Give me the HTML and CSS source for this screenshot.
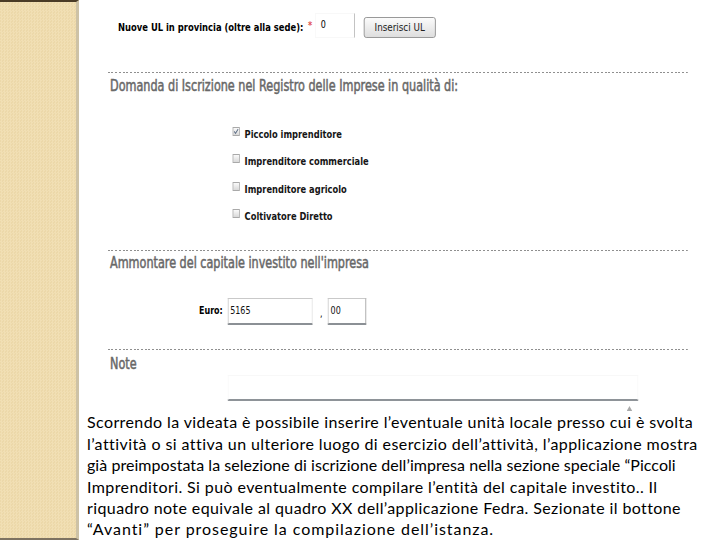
FILE: index.html
```html
<!DOCTYPE html>
<html lang="it">
<head>
<meta charset="utf-8">
<title>Iscrizione</title>
<link rel="stylesheet" href="styles.css">
</head>
<body>
<div class="page">
  <aside class="sidebar"></aside>
  <main class="main">
    <div class="shot">
      <div class="ul-row">
        <span class="lbl">Nuove UL in provincia (oltre alla sede):</span>
        <span class="req">*</span>
        <span class="ul-input">0</span>
        <span class="btn">Inserisci UL</span>
      </div>
      <div class="sep sep1"></div>
      <h2 class="sec sec1">Domanda di Iscrizione nel Registro delle Imprese in qualità di:</h2>
      <ul class="checks">
        <li><span class="cb"><svg viewBox="0 0 9 9" width="7" height="7"><path d="M1.2 4.4 L3.4 6.8 L7.6 1.4" fill="none" stroke="#5f6f86" stroke-width="1.4"/></svg></span>Piccolo imprenditore</li>
        <li><span class="cb"></span>Imprenditore commerciale</li>
        <li><span class="cb"></span>Imprenditore agricolo</li>
        <li><span class="cb"></span>Coltivatore Diretto</li>
      </ul>
      <div class="sep sep2"></div>
      <h2 class="sec sec2">Ammontare del capitale investito nell'impresa</h2>
      <div class="euro-row">
        <span class="euro-lbl">Euro:</span>
        <span class="field f-int">5165</span>
        <span class="comma">,</span>
        <span class="field f-dec">00</span>
      </div>
      <div class="sep sep3"></div>
      <h2 class="sec sec3">Note</h2>
      <div class="note-area"></div>
      <div class="scroll-arrow"></div>
    </div>
    <div class="caption">
      <span class="line l1">Scorrendo la videata è possibile inserire l’eventuale unità locale presso cui è svolta</span>
      <span class="line l2">l’attività o si attiva un ulteriore luogo di esercizio dell’attività, l’applicazione mostra</span>
      <span class="line l3">già preimpostata la selezione di iscrizione dell’impresa nella sezione speciale “Piccoli</span>
      <span class="line l4">Imprenditori. Si può eventualmente compilare l’entità del capitale investito.. Il</span>
      <span class="line l5">riquadro note equivale al quadro XX dell’applicazione Fedra. Sezionate il bottone</span>
      <span class="line l6">“Avanti” per proseguire la compilazione dell’istanza.</span>
    </div>
  </main>
</div>
</body>
</html>
```
FILE: styles.css
```css
* { box-sizing: border-box; }
html, body { margin: 0; padding: 0; }
body { width: 720px; height: 540px; overflow: hidden; background: #fff; }

.page { display: flex; height: 540px; }

.sidebar {
  width: 79px;
  flex: none;
  background-color: #efdcaf;
  background-image: repeating-conic-gradient(#f1dfb4 0 25%, #ecd8a9 0 50%);
  background-size: 3px 3px;
  border-top: 2px solid #4a3b26;
  border-bottom: 2px solid #7d7261;
  border-right: 3px solid #cdc2a6;
}

.main { flex: 1; min-width: 0; display: flex; flex-direction: column; overflow: hidden; }

.shot {
  width: 801px;
  height: 411.2px;
  flex: none;
  transform: scaleX(0.8);
  transform-origin: 0 0;
  font-family: "DejaVu Sans", sans-serif;
  color: #000;
}

.ul-row { display: flex; align-items: flex-start; margin-top: 13px; height: 25px; padding-left: 48.75px; }
.lbl { font-weight: bold; font-size: 10.5px; line-height: 14px; margin-top: 7.4px; white-space: nowrap; }
.req { color: #e25555; font-weight: bold; font-size: 10px; line-height: 10px; margin-top: 7.5px; margin-left: 5.75px; }
.ul-input {
  width: 50px; height: 25px; margin-left: 3.75px;
  border: 1px solid #f8f8f8; border-right-color: #b5b5b5;
  font-size: 10px; line-height: 21px; padding: 0 0 2px 6px;
}
.btn {
  margin-left: 10.4px; margin-top: 4px; width: 90.5px; height: 21px;
  border: 1px solid #8d8d8d; border-radius: 3px;
  background: linear-gradient(#fbfbfb, #dedede);
  font-size: 11px; line-height: 19px; text-align: center; color: #222;
}

.sep {
  margin-left: 36.25px; width: 725px; height: 1px;
  background: repeating-linear-gradient(to right, #8f8f8f 0 2.5px, transparent 2.5px 4.6px);
}
.sep1 { margin-top: 34px; }
.sep2 { margin-top: 19.35px; }
.sep3 { margin-top: 24.2px; }

.sec {
  margin: 0 0 0 38.75px;
  font-family: "DejaVu Sans Condensed", "DejaVu Sans", sans-serif;
  font-stretch: condensed;
  font-weight: normal;
  font-size: 15.6px;
  line-height: 18px;
  color: #686868;
  -webkit-text-stroke: 0.5px #686868;
  white-space: nowrap;
}
.sec1 { margin-top: 4.3px; }
.sec2 { margin-top: 2.9px; }
.sec3 { margin-top: 4.9px; }

.checks { list-style: none; margin: 25.35px 0 0; padding: 0 0 0 192px; }
.checks li {
  display: flex; align-items: flex-start; height: 27.5px; line-height: 27.5px;
  font-weight: bold; font-size: 10.4px; color: #151515; white-space: nowrap;
}
.cb {
  flex: none; width: 9px; height: 9px; margin-top: 6px; margin-right: 6px;
  border: 1px solid #a9a9a9; background: linear-gradient(#fafafa, #d9d9d9);
  display: flex; align-items: center; justify-content: center;
}

.euro-row { display: flex; align-items: flex-start; margin-top: 26.4px; height: 26.5px; padding-left: 150px; }
.euro-lbl { font-weight: bold; font-size: 10px; line-height: 26px; }
.field {
  height: 26.5px; border: 1px solid #c9c9c9; border-bottom: 2px solid #8b9095;
  font-size: 10px; line-height: 23.5px; padding-left: 2px; color: #111;
}
.f-int { width: 105.7px; margin-left: 6.15px; border-right-color: #e2e2e2; }
.comma { font-size: 10px; line-height: 26px; margin-left: 9.65px; margin-top: 3px; }
.f-dec { width: 48px; margin-left: 7px; border-right-color: #9a9a9a; }

.note-area {
  margin: 2px 0 0 186.25px; width: 512.5px; height: 26px;
  border: 1px solid #f8f8f8; border-bottom: 2px solid #8e9398;
}
.scroll-arrow {
  margin: 5.2px 0 0 684.6px; width: 7px; height: 5px;
  background: #a9a9a9; clip-path: polygon(50% 0, 100% 100%, 0 100%);
}

.caption {
  flex: none; padding-left: 8px;
  font-family: Lato, "Open Sans", sans-serif;
  font-size: 16px; line-height: 21.45px; color: #000;
}
.caption .line { display: block; white-space: nowrap; letter-spacing: 0.4px; }
.caption .l2 { letter-spacing: 0.42px; }
.caption .l3 { letter-spacing: 0.05px; }
.caption .l6 { letter-spacing: 0.95px; }
```
